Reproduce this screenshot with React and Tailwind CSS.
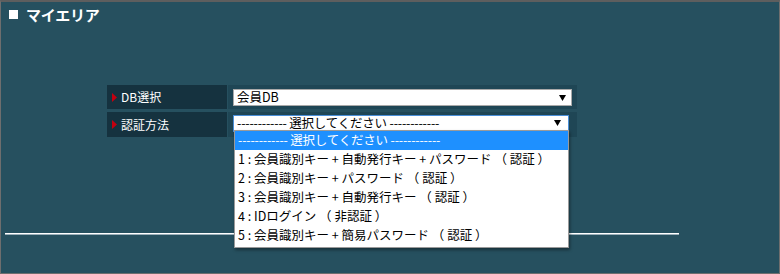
function Down() {
  return (
    <svg width="7" height="6" viewBox="0 0 7 6" className="block">
      <path d="M0 0 H7 L3.5 6 Z" fill="#000" />
    </svg>
  );
}
function Mark() {
  return (
    <svg width="5" height="9" viewBox="0 0 5 9" className="block mr-[4px]">
      <path d="M0 0 L5 4.5 L0 9 Z" fill="#c4000f" />
    </svg>
  );
}

export default function App() {
  const font = { fontFamily: '"Noto Sans CJK JP", "Noto Sans", sans-serif' };
  const options = [
    "1 : 会員識別キー + 自動発行キー + パスワード （ 認証 ）",
    "2 : 会員識別キー + パスワード （ 認証 ）",
    "3 : 会員識別キー + 自動発行キー （ 認証 ）",
    "4 : IDログイン （ 非認証 ）",
    "5 : 会員識別キー + 簡易パスワード （ 認証 ）",
  ];
  return (
    <div
      className="w-[780px] h-[274px] bg-[#26505f] border border-[#6e6e6e] border-t-2 border-t-[#5e5e5e] overflow-hidden"
      style={font}
    >
      <div className="flex items-center h-[24px] pl-[8px]">
        <div className="w-[9px] h-[9px] bg-white mr-[8px]" />
        <span className="text-white font-bold text-[15px] leading-none tracking-[-0.3px]">マイエリア</span>
      </div>

      <div className="ml-[106px] mt-[59px] grid grid-cols-[120px_349px] gap-x-[1px] gap-y-[3px]">
        <div className="h-[24px] bg-[#15323f] flex items-center pl-[5px] text-white text-[12px]">
          <Mark />DB選択
        </div>
        <div className="h-[24px] bg-[#1f4655] pl-[5px] pt-[4px]">
          <div className="w-[339px] h-[17px] bg-white border border-[#a9a9a9] flex items-center justify-between pl-[3px] pr-[5px] text-[12.5px] text-black leading-none">
            <span>会員DB</span>
            <Down />
          </div>
        </div>
        <div className="h-[25px] bg-[#15323f] flex items-center pl-[5px] text-white text-[12px]">
          <Mark />認証方法
        </div>
        <div className="h-[25px] bg-[#1f4655] pl-[5px] pt-[3px] relative">
          <div className="w-[336px] h-[17px] bg-white border border-[#4a8fd8] flex items-start justify-between pl-[3px] pr-[7px] pt-[1px] text-[12.5px] text-black leading-none">
            <span className="tracking-[-0.2px]">------------ 選択してください ------------</span>
            <span className="pt-[3px]"><Down /></span>
          </div>
          <div className="absolute left-[6px] top-[18px] w-[335px] bg-white border border-[#9a9a9a] shadow-[1px_2px_3px_rgba(0,0,0,0.4)] z-10 text-[12.5px] leading-none pb-[2px]">
            <div className="h-[19px] bg-[#1e90ff] text-white flex items-center pl-[3px] tracking-[-0.2px]">
              ------------ 選択してください ------------
            </div>
            {options.map((o) => (
              <div key={o} className="h-[19px] text-black flex items-center pl-[3px]">
                {o}
              </div>
            ))}
          </div>
        </div>
      </div>

      <div className="ml-[4px] mt-[96px] w-[674px] h-[2px] border-t border-t-white border-b border-b-[#9db0ba]" />
    </div>
  );
}
